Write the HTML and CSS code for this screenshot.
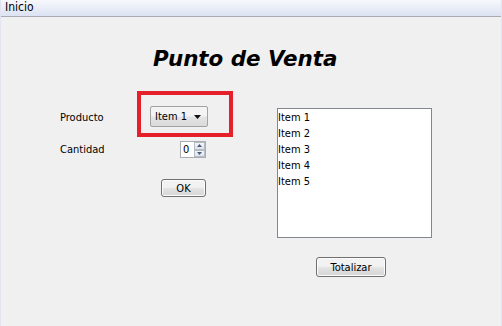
FILE: index.html
```html
<!DOCTYPE html>
<html>
    <head>
        <meta charset="UTF-8">
        <title>Punto de Venta</title>
        <link rel="stylesheet" href="styles.css">
    </head>
    <body>
        <div class="window">
            <div class="menubar">
                <span class="menu">Inicio</span>
            </div>
            <h1 class="title">Punto de Venta</h1>
            <div class="main">
                <div class="form">
                    <label class="lbl lbl-producto">Producto</label>
                    <div class="highlight">
                        <div class="combo">
                            <span>Item 1</span>
                            <svg class="arrow" width="8" height="5" viewBox="0 0 8 5"><path d="M0 0h7L3.5 4z" fill="#111"/></svg>
                        </div>
                    </div>
                    <label class="lbl lbl-cantidad">Cantidad</label>
                    <div class="spinner">
                        <span class="spin-val">0</span>
                        <div class="spin-btns">
                            <div class="spin-btn"><svg width="5" height="3" viewBox="0 0 5 3"><path d="M0 3h5L2.5 0z" fill="#4a5a78"/></svg></div>
                            <div class="spin-btn"><svg width="5" height="3" viewBox="0 0 5 3"><path d="M0 0h5L2.5 3z" fill="#4a5a78"/></svg></div>
                        </div>
                    </div>
                    <div></div>
                    <button class="btn btn-ok">OK</button>
                </div>
                <div class="side">
                    <ul class="list">
                        <li>Item 1</li>
                        <li>Item 2</li>
                        <li>Item 3</li>
                        <li>Item 4</li>
                        <li>Item 5</li>
                    </ul>
                    <button class="btn btn-total">Totalizar</button>
                </div>
            </div>
        </div>
    </body>
</html>
```

FILE: styles.css
```css
html,body{
    margin: 0;
    padding: 0;
    background: #f0f0f0;
    font-family: 'DejaVu Sans Condensed', 'DejaVu Sans', sans-serif;
    font-stretch: condensed;
    font-size: 11px;
    color: #000;
}
.window{
    width: 500px;
    height: 326px;
    border-left: 1px solid #e2e4f2;
    border-right: 1px solid #e2e4f2;
    background: #f0f0f0;
}
.menubar{
    height: 16px;
    border-bottom: 1px solid #a9abb3;
    background: linear-gradient(#f6f8fc, #dce2f2);
    padding-left: 4px;
}
.menu{
    font-size: 12px;
    line-height: 15px;
}
.title{
    margin: 0;
    padding: 29px 0 0 152px;
    height: 45px;
    font-family: 'DejaVu Sans', sans-serif;
    font-stretch: normal;
    font-size: 21.4px;
    font-weight: bold;
    font-style: italic;
    line-height: 26px;
}
.main{
    display: flex;
}
.form{
    width: 217px;
    padding-left: 59px;
    display: grid;
    grid-template-columns: 77px 96px;
    align-items: start;
    align-content: start;
}
.lbl{
    line-height: 16px;
}
.lbl-producto{
    margin-top: 19px;
}
.lbl-cantidad{
    margin-top: 5px;
}
.highlight{
    height: 46px;
    box-sizing: border-box;
    border: 4px solid #e5202b;
    padding: 11px 0 0 9px;
}
.combo{
    height: 21px;
    width: 58px;
    box-sizing: border-box;
    border: 1px solid #a2a2a2;
    border-radius: 2px;
    background: linear-gradient(#f3f3f3 45%, #e3e3e3 55%, #dadada);
    display: flex;
    align-items: center;
    justify-content: space-between;
    padding: 0 5px 0 4px;
}
.arrow{
    margin-top: 2px;
}
.spinner{
    margin: 4px 0 0 43px;
    width: 26px;
    height: 17px;
    box-sizing: border-box;
    border: 1px solid #abadb3;
    background: #fff;
    display: flex;
}
.spin-val{
    flex: 1;
    padding-left: 2px;
    line-height: 15px;
}
.spin-btns{
    width: 11px;
    display: flex;
    flex-direction: column;
}
.spin-btn{
    flex: 1;
    border: 1px solid #b6bcc6;
    background: linear-gradient(#f4f6f9, #dde3ea);
    display: flex;
    align-items: center;
    justify-content: center;
}
.btn{
    font-family: 'DejaVu Sans Condensed', 'DejaVu Sans', sans-serif;
    font-stretch: condensed;
    font-size: 11px;
    color: #000;
    border: 1px solid #707070;
    border-radius: 3px;
    background: linear-gradient(#f2f2f2 45%, #e2e2e2 55%, #d6d6d6);
    box-shadow: inset 0 0 0 1px #fcfcfc;
    padding: 0;
    height: 18px;
}
.btn-ok{
    margin: 21px 0 0 24px;
    width: 45px;
}
.side{
    display: flex;
    flex-direction: column;
    align-items: flex-start;
    width: 156px;
    padding-top: 17px;
}
.list{
    list-style: none;
    margin: 0;
    padding: 1px 0 0 0;
    width: 155px;
    height: 130px;
    box-sizing: border-box;
    border: 1px solid #828790;
    background: #fff;
}
.list li{
    line-height: 16px;
}
.btn-total{
    margin: 19px 0 0 39px;
    width: 70px;
    height: 20px;
}
```
